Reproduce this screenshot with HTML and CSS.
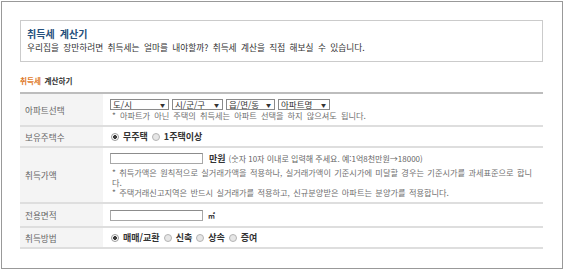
FILE: index.html
```html
<!DOCTYPE html>
<html lang="ko">
<head>
<meta charset="utf-8">
<title>취득세 계산기</title>
<link rel="stylesheet" href="styles.css">
</head>
<body>
<div class="frame">
  <div class="intro">
    <h1 class="intro-title">취득세 계산기</h1>
    <p class="intro-desc">우리집을 장만하려면 취득세는 얼마를 내야할까? 취득세 계산을 직접 해보실 수 있습니다.</p>
  </div>
  <h2 class="sub"><span class="accent">취득세</span> 계산하기</h2>
  <div class="form">
    <div class="row r1">
      <div class="label">아파트선택</div>
      <div class="cell">
        <div class="selects">
          <span class="sel s1"><select><option>도/시</option></select></span>
          <span class="sel s2"><select><option>시/군/구</option></select></span>
          <span class="sel s3"><select><option>읍/면/동</option></select></span>
          <span class="sel s4"><select><option>아파트명</option></select></span>
        </div>
        <p class="note">* 아파트가 아닌 주택의 취득세는 아파트 선택을 하지 않으셔도 됩니다.</p>
      </div>
    </div>
    <div class="row r2">
      <div class="label">보유주택수</div>
      <div class="cell">
        <div class="radios">
          <input type="radio" name="own" checked><span class="rlabel">무주택</span>
          <input type="radio" name="own"><span class="rlabel">1주택이상</span>
        </div>
      </div>
    </div>
    <div class="row r3">
      <div class="label">취득가액</div>
      <div class="cell">
        <div class="line">
          <input type="text" class="tin">
          <span class="unit">만원</span>
          <span class="hint">(숫자 10자 이내로 입력해 주세요. 예:1억8천만원→18000)</span>
        </div>
        <div class="notes">
          <p class="note2">* 취득가액은 원칙적으로 실거래가액을 적용하나, 실거래가액이 기준시가에 미달할 경우는 기준시가를 과세표준으로 합니다.</p>
          <p class="note2">* 주택거래신고지역은 반드시 실거래가를 적용하고, 신규분양받은 아파트는 분양가를 적용합니다.</p>
        </div>
      </div>
    </div>
    <div class="row r4">
      <div class="label">전용면적</div>
      <div class="cell">
        <div class="line">
          <input type="text" class="tin">
          <span class="sqm">㎡</span>
        </div>
      </div>
    </div>
    <div class="row r5">
      <div class="label">취득방법</div>
      <div class="cell">
        <div class="radios">
          <input type="radio" name="how" checked><span class="rlabel">매매/교환</span>
          <input type="radio" name="how"><span class="rlabel">신축</span>
          <input type="radio" name="how"><span class="rlabel">상속</span>
          <input type="radio" name="how"><span class="rlabel">증여</span>
        </div>
      </div>
    </div>
  </div>
</div>
</body>
</html>
```
FILE: styles.css
```css
* { box-sizing: border-box; }
body {
  margin: 0;
  background: #fff;
  color: #333;
  font-family: "Noto Sans CJK KR", "Noto Sans", sans-serif;
}
.frame {
  margin: 1px;
  width: 562px;
  height: 268px;
  border: 1px solid #999;
  padding: 18px 0 0 18px;
}
.intro {
  width: 523px;
  height: 42px;
  border: 1px solid #cbcbcb;
  padding: 6px 6px;
}
.intro-title {
  margin: 0;
  font-size: 10px;
  line-height: 14px;
  font-weight: 700;
  word-spacing: 2.4px;
  color: #24507c;
}
.intro-desc {
  margin: 0;
  font-size: 8.7px;
  line-height: 14px;
  word-spacing: 1.9px;
  color: #333;
}
.sub {
  margin: 13px 0 5px;
  font-size: 7.6px;
  line-height: 12px;
  font-weight: 700;
  word-spacing: 1.5px;
  color: #333;
}
.accent { color: #e07b2c; }
.form {
  width: 523px;
  border-top: 2px solid #bdbdbd;
}
.row {
  display: grid;
  grid-template-columns: 83px 1fr;
  border-bottom: 2px solid #dedede;
}
.r1 { height: 33px; }
.r2 { height: 21px; }
.r3 { height: 56px; }
.r4 { height: 24px; }
.r5 { height: 21px; }
.label {
  background: #f4f4f4;
  padding-left: 5px;
  font-size: 8.6px;
  color: #666;
  display: flex;
  align-items: center;
}
.cell {
  padding: 0 3px 0 7px;
  display: flex;
  flex-direction: column;
  justify-content: center;
}
.selects {
  display: flex;
  gap: 3px;
  height: 11px;
}
.sel {
  position: relative;
  display: block;
  height: 11px;
}
.sel select {
  appearance: none;
  -webkit-appearance: none;
  display: block;
  height: 11px;
  margin: 0;
  padding: 0 0 0 2px;
  border: 1px solid #8a8a8a;
  border-radius: 0;
  background: #fff;
  color: #333;
  font-family: inherit;
  font-size: 8.5px;
  line-height: 9px;
}
.sel::after {
  content: "▼";
  position: absolute;
  right: 4px;
  top: 2px;
  font-size: 5px;
  line-height: 7px;
  color: #333;
  pointer-events: none;
}
.s1 select { width: 59px; }
.s2 select { width: 51px; }
.s3 select { width: 49px; }
.s4 select { width: 52px; }
.note {
  margin: 0;
  padding-left: 2px;
  font-size: 8.2px;
  line-height: 11px;
  word-spacing: 1.8px;
  color: #707070;
}
.radios {
  display: flex;
  align-items: center;
  height: 12px;
}
.radios input {
  appearance: none;
  -webkit-appearance: none;
  width: 8px;
  height: 8px;
  margin: 0 4px 0 1px;
  border: 1px solid #b4b4b4;
  border-radius: 50%;
  background: #e6e6e6;
}
.radios input:checked {
  background: radial-gradient(circle, #3a3a3a 0 1.6px, #fff 2.2px);
  border-color: #9a9a9a;
}
.rlabel {
  font-size: 9px;
  font-weight: 700;
  color: #333;
  margin-right: 3px;
}
.line {
  display: flex;
  align-items: center;
  height: 11px;
}
.tin {
  width: 93px;
  height: 11px;
  margin: 0;
  padding: 0;
  border: 1px solid #a8a8a8;
  border-top-color: #8c8c8c;
  background: #fff;
}
.unit {
  margin-left: 6px;
  font-size: 9px;
  font-weight: 700;
  color: #333;
}
.hint {
  margin-left: 3px;
  font-size: 8px;
  color: #666;
}
.notes { margin-top: 3px; }
.note2 {
  margin: 0;
  padding-left: 2px;
  font-size: 8.2px;
  line-height: 10px;
  word-spacing: 1.1px;
  color: #707070;
}
.sqm {
  margin-left: 5px;
  font-size: 7px;
  font-weight: 700;
  color: #333;
}
```
